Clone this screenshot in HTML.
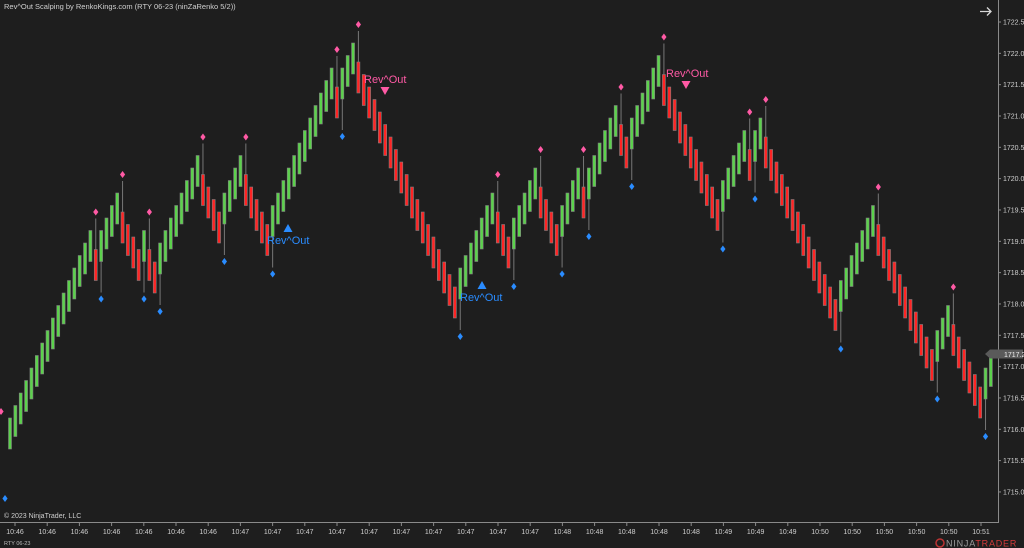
<!DOCTYPE html>
<html><head><meta charset="utf-8">
<style>
html,body{margin:0;padding:0;background:#1e1e1e;}
body{width:1024px;height:548px;overflow:hidden;position:relative;font-family:"Liberation Sans",sans-serif;}
svg{position:absolute;left:0;top:0;}
</style></head>
<body>
<svg id="c" width="1024" height="548" xmlns="http://www.w3.org/2000/svg">
<rect width="1024" height="548" fill="#1e1e1e"/>
<text x="4" y="9" font-size="7.5" fill="#d0d0d0">Rev^Out Scalping by RenkoKings.com (RTY 06-23 (ninZaRenko 5/2))</text>
<g stroke="#d8d8d8" stroke-width="1.3" fill="none"><path d="M980 11.5H991M987 7.5L991 11.5L987 15.5"/></g>
<line x1="998.5" y1="0" x2="998.5" y2="522" stroke="#8a8a8a"/>
<line x1="0" y1="522.5" x2="999" y2="522.5" stroke="#8a8a8a"/>
<g id="ax"></g>
<g id="bars"></g>
<text x="4" y="518" font-size="7" fill="#cfcfcf">© 2023 NinjaTrader, LLC</text>
<text x="4" y="545" font-size="5.5" fill="#bbb">RTY 06-23</text>
<g fill="#2a8cff"><polygon points="288,224 292.5,232 283.5,232"/><polygon points="482,281 486.5,289 477.5,289"/></g>
<g fill="#ff5aa5"><polygon points="380.5,87 389.5,87 385,95"/><polygon points="681.5,81 690.5,81 686,89"/></g>
<text x="267" y="244" font-size="11" fill="#2a8cff">Rev^Out</text>
<text x="460" y="301" font-size="11" fill="#2a8cff">Rev^Out</text>
<text x="364" y="83" font-size="11" fill="#ff5aa5">Rev^Out</text>
<text x="666" y="77" font-size="11" fill="#ff5aa5">Rev^Out</text>
<path d="M985 354 L990 349.5 H1023 V358.5 H990 Z" fill="#5a5a5a"/>
<text x="1004" y="357" font-size="7" fill="#eee">1717.2</text>
<circle cx="940" cy="543" r="4" fill="none" stroke="#b33" stroke-width="1.5"/>
<text x="946" y="546.5" font-size="9" fill="#9a9a9a" letter-spacing="0.8">NINJA<tspan fill="#d23a3a">TRADER</tspan></text>
</svg>
<script>
(function(){
var ns="http://www.w3.org/2000/svg";
function el(t,a,p){var e=document.createElementNS(ns,t);for(var k in a)e.setAttribute(k,a[k]);(p||document.getElementById('bars')).appendChild(e);return e;}
var ax=document.getElementById('ax');
var labs=["1722.5","1722.0","1721.5","1721.0","1720.5","1720.0","1719.5","1719.0","1718.5","1718.0","1717.5","1717.0","1716.5","1716.0","1715.5","1715.0"];
for(var i=0;i<labs.length;i++){var y=22+i*31.33;
 el('line',{x1:998,y1:y,x2:1001,y2:y,stroke:'#8a8a8a'},ax);
 var t=el('text',{x:1003,y:y+2.5,'font-size':7,fill:'#cfcfcf'},ax);t.textContent=labs[i];}
var tl=[];
function add(s,n){for(var i=0;i<n;i++)tl.push(s);}
add("10:46",7);add("10:47",10);add("10:48",5);add("10:49",3);add("10:50",5);add("10:51",1);
for(var i=0;i<tl.length;i++){var x=15+i*32.2;
 el('line',{x1:x,y1:523,x2:x,y2:526,stroke:'#8a8a8a'},ax);
 var t=el('text',{x:x,y:534,'font-size':7,fill:'#cfcfcf','text-anchor':'middle'},ax);t.textContent=tl[i];}
var runs=[16,-1,4,-4,1,-2,8,-4,4,-5,12,-1,3,-19,7,-3,5,-4,4,-1,6,-2,6,-11,5,-1,2,-14,7,-11,3,-6,2];
var dirs=[];runs.forEach(function(r){var n=Math.abs(r),d=r>0?1:-1;for(var i=0;i<n;i++)dirs.push(d);});
var t=418,prev=0,H=31,x0=10,dx=5.36;
for(var i=0;i<dirs.length;i++){
 var d=dirs[i],rev=(prev!==0&&d!==prev);
 if(i>0){ if(rev){ t += (d>0?-19:19);} else { t += (d>0?-12.5:12.5);} }
 var x=x0+i*dx;
 if(rev){
  if(d<0){ el('line',{x1:x,y1:t-31,x2:x,y2:t,stroke:'#777',"stroke-width":1});
   el('path',{d:'M'+x+' '+(t-41)+'l2.6 3.5-2.6 3.5-2.6-3.5z',fill:'#ff5aa5'});}
  else { el('line',{x1:x,y1:t+H,x2:x,y2:t+H+31,stroke:'#777',"stroke-width":1});
   el('path',{d:'M'+x+' '+(t+H+34)+'l2.6 3.5-2.6 3.5-2.6-3.5z',fill:'#2a8cff'});}
 }
 el('rect',{x:x-1.5,y:t,width:3,height:H,fill:d>0?'#5cd24c':'#ff2424',stroke:'#808080','stroke-width':0.6});
 prev=d;
}
el('path',{d:'M1 408l2.6 3.5-2.6 3.5-2.6-3.5z',fill:'#ff5aa5'});
el('path',{d:'M5 495l2.6 3.5-2.6 3.5-2.6-3.5z',fill:'#2a8cff'});
})();
</script>
</body></html>
